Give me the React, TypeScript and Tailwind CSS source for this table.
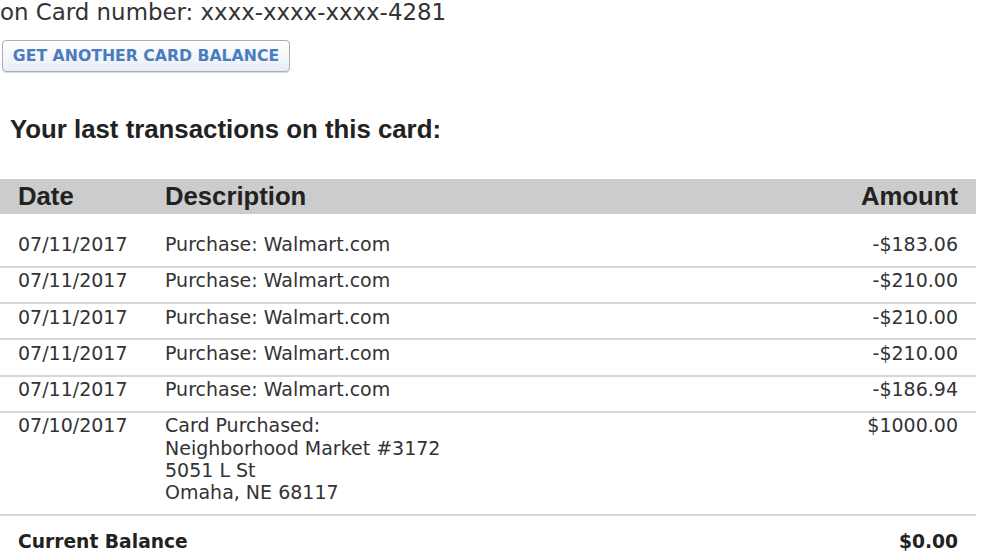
const transactions = [
  { date: '07/11/2017', lines: ['Purchase: Walmart.com'], amount: '-$183.06' },
  { date: '07/11/2017', lines: ['Purchase: Walmart.com'], amount: '-$210.00' },
  { date: '07/11/2017', lines: ['Purchase: Walmart.com'], amount: '-$210.00' },
  { date: '07/11/2017', lines: ['Purchase: Walmart.com'], amount: '-$210.00' },
  { date: '07/11/2017', lines: ['Purchase: Walmart.com'], amount: '-$186.94' },
  {
    date: '07/10/2017',
    lines: ['Card Purchased:', 'Neighborhood Market #3172', '5051 L St', 'Omaha, NE 68117'],
    amount: '$1000.00',
  },
]

export default function App() {
  return (
    <div className="min-h-screen bg-white font-['DejaVu_Sans',Verdana,sans-serif] text-[#333]">
      <div className="text-[22.9px] leading-[24px] whitespace-nowrap">on Card number: xxxx-xxxx-xxxx-4281</div>

      <button className="mt-4 ml-[2px] h-8 w-[288px] rounded-[4px] border border-[#a7afba] bg-gradient-to-b from-white to-[#e9eef5] text-[15.7px] font-bold uppercase text-[#4a7cc0] shadow-[0_1px_1px_rgba(0,0,0,0.15)]">
        Get another card balance
      </button>

      <h2 className="mt-[43px] ml-[10px] font-['Liberation_Sans',Arial,sans-serif] text-[25.8px] font-bold leading-[28px] text-[#222]">
        Your last transactions on this card:
      </h2>

      <div className="mt-[36px] w-[976px]">
        {/* Header */}
        <div className="flex h-[35px] items-center bg-[#cccccc] px-[18px] font-['Liberation_Sans',Arial,sans-serif] text-[25.7px] font-bold text-[#222]">
          <div className="w-[147px]">Date</div>
          <div className="flex-1">Description</div>
          <div>Amount</div>
        </div>

        <div className="h-[17.5px]" />

        {transactions.map((t, i) => (
          <div
            key={i}
            className="flex border-b-2 border-[#d6d6d6] px-[18px] pt-[1.5px] pb-[10.35px] text-[19px] leading-[22.4px]"
          >
            <div className="w-[147px]">{t.date}</div>
            <div className="flex-1">
              {t.lines.map((l, j) => (
                <div key={j}>{l}</div>
              ))}
            </div>
            <div>{t.amount}</div>
          </div>
        ))}

        <div className="flex px-[18px] pt-[15px] text-[18.7px] font-bold leading-[22.4px] text-[#222]">
          <div className="flex-1">Current Balance</div>
          <div>$0.00</div>
        </div>
      </div>
    </div>
  )
}
